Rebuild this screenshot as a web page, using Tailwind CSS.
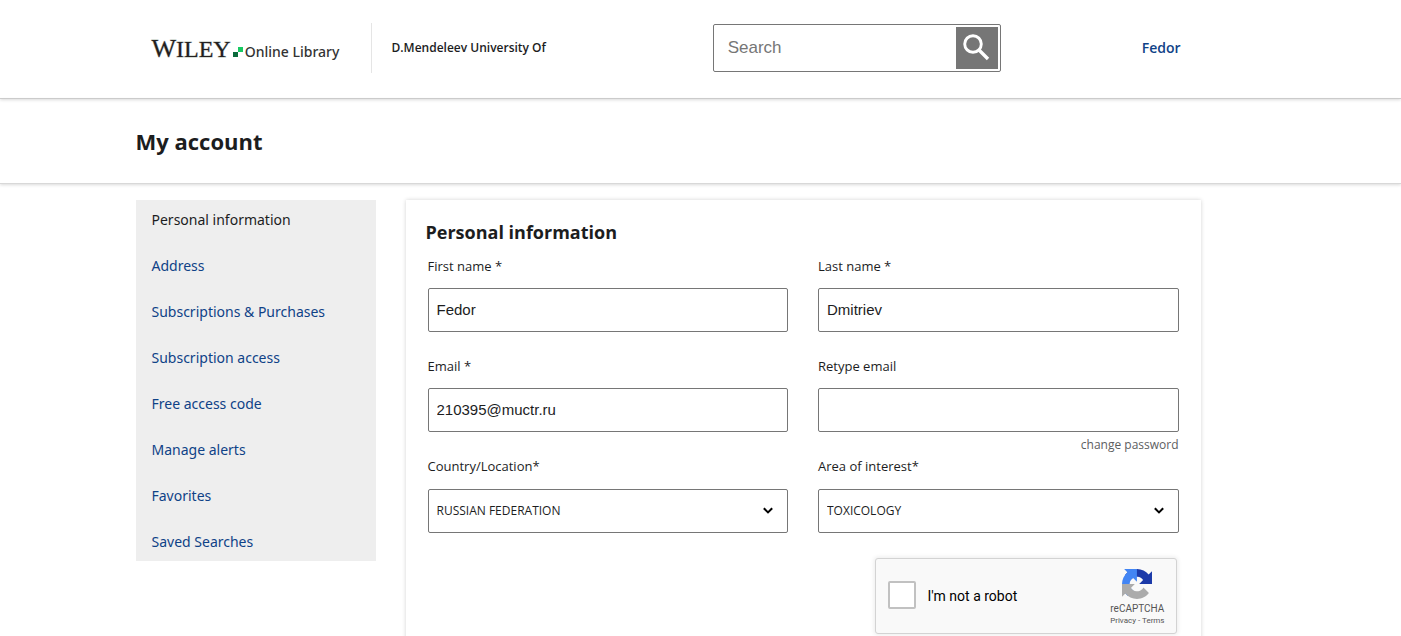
<!DOCTYPE html>
<html lang="en">
<head>
<meta charset="utf-8">
<meta name="viewport" content="width=device-width, initial-scale=1">
<title>My account</title>
<script src="https://cdn.jsdelivr.net/npm/@tailwindcss/browser@4"></script>
</head>
<body class="overflow-x-hidden bg-white font-['Open_Sans',sans-serif] text-[#1c1d1e]">
<header class="border-b border-[#d0d0d0] shadow-[0_1px_3px_rgba(0,0,0,0.15)]">
  <div class="mx-auto flex h-[98px] max-w-[1130px] items-center pb-[2px]">
    <a href="#" class="ml-4 flex w-[219px] shrink-0 items-baseline whitespace-nowrap pt-px" aria-label="Wiley Online Library">
      <span class="font-['Liberation_Serif',serif] text-2xl leading-7 text-[#231f20] [-webkit-text-stroke:1px_#231f2055]"><span class="text-[26px]">W</span>ILEY</span>
      <svg class="ml-[2px] mr-[2px] h-[10px] w-[10px] shrink-0" viewBox="0 0 10 10"><path fill="#18c962" d="M5 0h5v5H5z"/><path fill="#0b6b3c" d="M0 5h5v5H0z"/></svg>
      <span class="font-['Noto_Sans',sans-serif] text-sm font-medium text-[#333]">Online Library</span>
    </a>
    <div class="flex h-[50px] flex-1 items-center border-l border-[#e5e5e5] pl-5 text-xs font-semibold">D.Mendeleev University Of</div>
    <form class="flex h-12 w-[288px] shrink-0 items-center rounded-[2px] border border-[#767676] p-[2px]">
      <input type="search" aria-label="Search" placeholder="Search" class="h-full min-w-0 flex-1 pb-px pl-3 font-['Liberation_Sans',sans-serif] text-[17px] outline-none placeholder:text-[#767676]">
      <button type="button" aria-label="Submit search" class="flex h-[42px] w-[42px] items-center justify-center bg-[#767676]">
        <svg class="mb-[2px] mr-[2px] h-7 w-7" viewBox="0 0 28 28" fill="none" stroke="#fff"><circle cx="11" cy="11" r="8.3" stroke-width="2.9"/><path d="M16.5 16.5l9.5 9.5" stroke-width="3.4"/></svg>
      </button>
    </form>
    <a href="#" class="ml-[141px] mr-[85px] text-sm font-semibold text-[#0f4287]">Fedor</a>
  </div>
</header>
<div class="border-b border-[#d8d8d8] shadow-[0_1px_3px_rgba(0,0,0,0.15)]">
  <div class="mx-auto flex h-[84px] max-w-[1130px] items-center">
    <h1 class="text-[22px] font-bold">My account</h1>
  </div>
</div>
<main class="mx-auto flex max-w-[1130px] items-start gap-[30px] pr-[65px] pt-4">
  <nav aria-label="Account" class="w-[240px] shrink-0 bg-[#eee]">
    <ul class="flex flex-col gap-[23px] px-4 py-2 font-['Noto_Sans',sans-serif] text-sm leading-[23px] text-[#0f4287]">
      <li><a href="#" aria-current="page" class="text-[#1c1d1e]">Personal information</a></li>
      <li><a href="#">Address</a></li>
      <li><a href="#">Subscriptions &amp; Purchases</a></li>
      <li><a href="#">Subscription access</a></li>
      <li><a href="#">Free access code</a></li>
      <li><a href="#">Manage alerts</a></li>
      <li><a href="#">Favorites</a></li>
      <li><a href="#">Saved Searches</a></li>
    </ul>
  </nav>
  <section class="min-w-0 flex-1 px-[22px] pb-10 pt-5 shadow-[0_0_4px_rgba(0,0,0,0.18)]">
    <h2 class="-ml-[2px] mb-3 text-lg leading-6 font-bold">Personal information</h2>
    <form>
      <div class="grid grid-cols-2 gap-x-[30px]">
        <div class="pb-6">
          <label for="first" class="mb-3 block text-[13px] leading-5">First name *</label>
          <input id="first" type="text" value="Fedor" class="h-11 w-full rounded-[2px] border border-[#767676] px-2 pb-[2px] font-['Liberation_Sans',sans-serif] text-[15px]">
        </div>
        <div class="pb-6">
          <label for="last" class="mb-3 block text-[13px] leading-5">Last name *</label>
          <input id="last" type="text" value="Dmitriev" class="h-11 w-full rounded-[2px] border border-[#767676] px-2 pb-[2px] font-['Liberation_Sans',sans-serif] text-[15px]">
        </div>
        <div class="pb-6">
          <label for="email" class="mb-3 block text-[13px] leading-5">Email *</label>
          <input id="email" type="email" value="210395@muctr.ru" class="h-11 w-full rounded-[2px] border border-[#767676] px-2 pb-[2px] font-['Liberation_Sans',sans-serif] text-[15px]">
        </div>
        <div>
          <label for="retype" class="mb-3 block text-[13px] leading-5">Retype email</label>
          <input id="retype" type="email" class="block h-11 w-full rounded-[2px] border border-[#767676] px-2 pb-[2px] font-['Liberation_Sans',sans-serif] text-[15px]">
          <a href="#" class="block h-6 text-right text-xs leading-[26px] text-[#5d5e5f]">change password</a>
        </div>
        <div>
          <label for="country" class="mb-[13px] block text-[13px] leading-5">Country/Location*</label>
          <div class="relative">
            <select id="country" class="block h-11 w-full appearance-none rounded-[2px] border border-[#767676] px-2 text-xs"><option>RUSSIAN FEDERATION</option></select>
            <svg class="pointer-events-none absolute right-[15px] top-[18px] h-[7px] w-[10px]" viewBox="0 0 10 7" fill="none" stroke="#000" stroke-width="2"><path d="M.8 1.2L5 5.4l4.2-4.2"/></svg>
          </div>
        </div>
        <div>
          <label for="area" class="mb-[13px] block text-[13px] leading-5">Area of interest*</label>
          <div class="relative">
            <select id="area" class="block h-11 w-full appearance-none rounded-[2px] border border-[#767676] px-2 text-xs"><option>TOXICOLOGY</option></select>
            <svg class="pointer-events-none absolute right-[15px] top-[18px] h-[7px] w-[10px]" viewBox="0 0 10 7" fill="none" stroke="#000" stroke-width="2"><path d="M.8 1.2L5 5.4l4.2-4.2"/></svg>
          </div>
        </div>
      </div>
      <div class="ml-auto mr-[2px] mt-[25px] flex h-[76px] w-[302px] items-center rounded-[3px] border border-[#d3d3d3] bg-[#f9f9f9] pb-[2px] pl-3 pr-[11px] font-[Roboto,sans-serif] shadow-[0_0_4px_1px_rgba(0,0,0,0.08)]">
        <input id="robot" type="checkbox" class="h-7 w-7 appearance-none rounded-[2px] border-2 border-[#c1c1c1] bg-white">
        <label for="robot" class="ml-3 flex-1 pt-[2px] text-sm text-black">I'm not a robot</label>
        <div class="flex flex-col items-center pt-[6px] text-[#555]">
          <svg class="h-[30px] w-[30px]" viewBox="0 0 64 64">
            <path fill="#1c3aa9" d="M64 31.955l-.033-1.37V4.687l-7.16 7.16C50.948 4.674 42.033.093 32.05.093c-10.4 0-19.622 4.96-25.458 12.64l11.736 11.86a15.55 15.55 0 0 1 4.754-5.334c2.05-1.6 4.952-2.906 8.968-2.906.485 0 .86.057 1.135.163 4.976.393 9.288 3.14 11.828 7.124l-8.307 8.307L64 31.953"/>
            <path fill="#4285f4" d="M31.862.094l-1.37.033H4.594l7.16 7.16C4.58 13.147 0 22.06 0 32.046c0 10.4 4.96 19.622 12.64 25.458l11.86-11.736a15.55 15.55 0 0 1-5.334-4.754c-1.6-2.05-2.906-4.952-2.906-8.968 0-.485.057-.86.163-1.135.393-4.976 3.14-9.288 7.124-11.828l8.307 8.307L31.86.095"/>
            <path fill="#ababab" d="M.001 32.045l.033 1.37v25.898l7.16-7.16c5.86 7.173 14.774 11.754 24.76 11.754 10.4 0 19.622-4.96 25.458-12.64L45.676 39.4a15.55 15.55 0 0 1-4.754 5.334c-2.05 1.6-4.952 2.906-8.968 2.906-.485 0-.86-.057-1.135-.163-4.976-.393-9.288-3.14-11.828-7.124l8.307-8.307c-10.522.04-22.4.066-27.295-.006"/>
          </svg>
          <div class="mt-1 text-[10px] leading-3">reCAPTCHA</div>
          <div class="text-[8px] leading-3"><a href="#">Privacy</a> - <a href="#">Terms</a></div>
        </div>
      </div>
    </form>
  </section>
</main>
</body>
</html>
